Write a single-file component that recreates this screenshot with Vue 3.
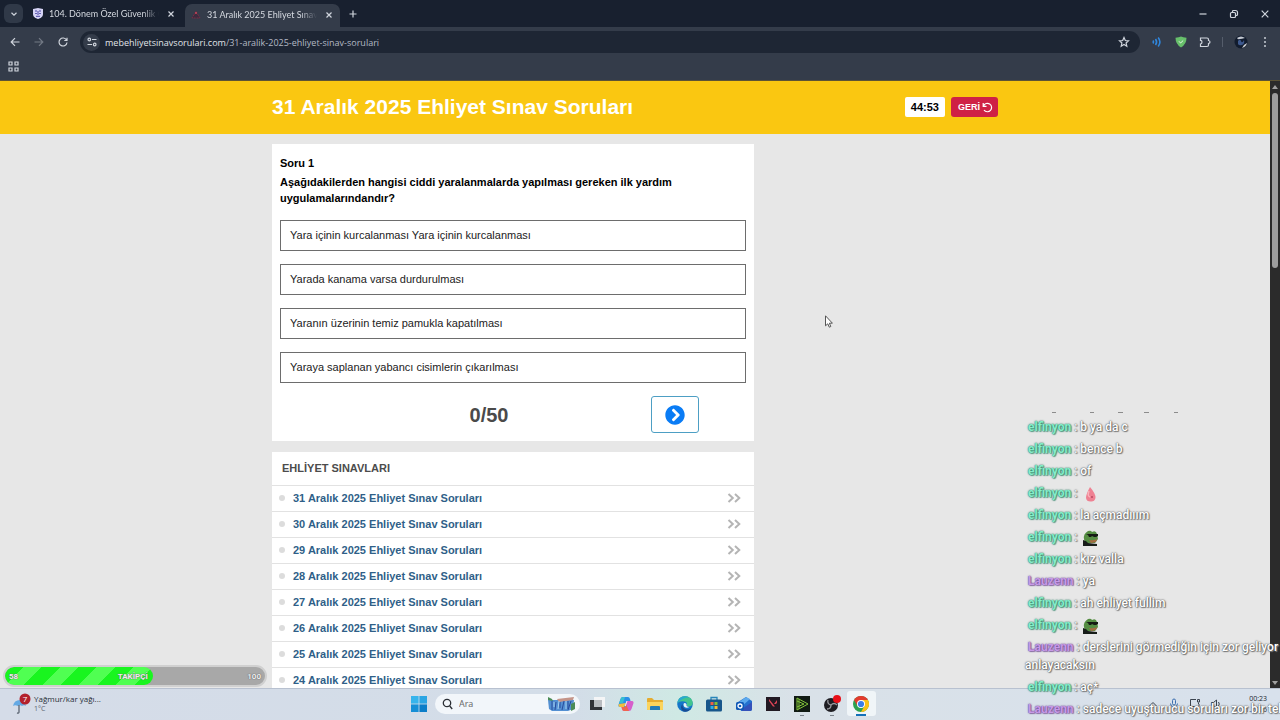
<script setup>
import { ref } from 'vue'

const url = 'mebehliyetsinavsorulari.com'
const path = '/31-aralik-2025-ehliyet-sinav-sorulari'
const search = ref('')

const options = [
  'Yara içinin kurcalanması Yara içinin kurcalanması',
  'Yarada kanama varsa durdurulması',
  'Yaranın üzerinin temiz pamukla kapatılması',
  'Yaraya saplanan yabancı cisimlerin çıkarılması',
]

const exams = [31, 30, 29, 28, 27, 26, 25, 24].map((day) => `${day} Aralık 2025 Ehliyet Sınav Soruları`)

const messages = [
  { user: 'elfinyon', text: 'b ya da c' },
  { user: 'elfinyon', text: 'bence b' },
  { user: 'elfinyon', text: 'of' },
  { user: 'elfinyon', emote: 'drop' },
  { user: 'elfinyon', text: 'la açmadııım' },
  { user: 'elfinyon', emote: 'frog' },
  { user: 'elfinyon', text: 'kız valla' },
  { user: 'Lauzenn', text: 'ya' },
  { user: 'elfinyon', text: 'ah ehliyet fullim' },
  { user: 'elfinyon', emote: 'frog' },
  { user: 'Lauzenn', text: 'derslerini görmediğin için zor geliyor\nanlayacaksın' },
  { user: 'elfinyon', text: 'aç*' },
  { user: 'Lauzenn', text: 'sadece uyuşturucu soruları zor bir tek' },
]

const followers = { current: 58, goal: 100, fill: 57 }
</script>

<template>
  <div class="desktop">
    <div class="browser">
      <div class="tabs">
        <button class="tab-search" aria-label="Sekme ara">
          <svg width="8" height="8" viewBox="0 0 8 8"><path d="M1.5 2.8 4 5.2l2.5-2.4" /></svg>
        </button>
        <div class="tab">
          <svg class="favicon" width="10" height="11" viewBox="0 0 10 11">
            <path d="M0 1 5 0l5 1v5c0 3-2.500 4.300-5 5C2.500 10.300 0 9 0 6z" fill="#d5d3f5" />
            <path d="M2 3h2M6 3h2M2.200 5.500h1.600M6.200 5.500h1.600M5 3v4M3 8.300h4" stroke="#4a45a5" />
          </svg>
          <span class="tab-title">104. Dönem Özel Güvenlik Çıkmış</span>
          <button class="icon-button" aria-label="Kapat">
            <svg width="8" height="8" viewBox="0 0 8 8"><path d="m1.500 1.500 5 5m0-5-5 5" /></svg>
          </button>
        </div>
        <div class="tab active">
          <svg class="favicon" width="10" height="10" viewBox="0 0 10 10">
            <path d="M5 1.500 9 8H1z" fill="#3b2c3f" stroke="#7b2b45" stroke-dasharray="2 1" />
            <circle cx="5" cy="3" r="1" fill="#c9485a" />
          </svg>
          <span class="tab-title">31 Aralık 2025 Ehliyet Sınav Soruları</span>
          <button class="icon-button" aria-label="Kapat">
            <svg width="8" height="8" viewBox="0 0 8 8"><path d="m1.500 1.500 5 5m0-5-5 5" /></svg>
          </button>
        </div>
        <button class="icon-button new-tab" aria-label="Yeni sekme">
          <svg width="10" height="10" viewBox="0 0 10 10"><path d="M5 1.500v7M1.500 5h7" /></svg>
        </button>
        <div class="window-buttons">
          <button class="icon-button" aria-label="Simge durumuna küçült">
            <svg width="10" height="10" viewBox="0 0 10 10"><path d="M1.500 5h7" /></svg>
          </button>
          <button class="icon-button" aria-label="Önceki boyut">
            <svg width="10" height="10" viewBox="0 0 10 10">
              <rect x="1.500" y="3.500" width="5" height="5" rx="1" />
              <path d="M3.500 3V2.500a1 1 0 0 1 1-1h2a2 2 0 0 1 2 2v2a1 1 0 0 1-1 1H7" />
            </svg>
          </button>
          <button class="icon-button" aria-label="Pencereyi kapat">
            <svg width="10" height="10" viewBox="0 0 10 10"><path d="m1.700 1.700 6.600 6.600m0-6.600L1.700 8.300" /></svg>
          </button>
        </div>
      </div>

      <div class="toolbar">
        <button class="icon-button nav" aria-label="Geri">
          <svg width="12" height="12" viewBox="0 0 12 12"><path d="M10.500 6h-8M6 2.200 2.200 6 6 9.800" /></svg>
        </button>
        <button class="icon-button nav faded" aria-label="İleri">
          <svg width="12" height="12" viewBox="0 0 12 12"><path d="M1.500 6h8M6 2.200 9.800 6 6 9.800" /></svg>
        </button>
        <button class="icon-button nav" aria-label="Yenile">
          <svg width="12" height="12" viewBox="0 0 12 12"><path d="M9.500 4A4 4 0 1 0 10 6.500M10 1.800v2.700H7.300" /></svg>
        </button>
        <div class="address">
          <button class="site-info" aria-label="Site bilgileri">
            <svg width="10" height="10" viewBox="0 0 10 10">
              <circle cx="2.300" cy="2.500" r="1.300" />
              <path d="M5 2.500h4.500M.5 7.500H5" />
              <circle cx="7.700" cy="7.500" r="1.300" />
            </svg>
          </button>
          <a class="url" href="#">{{ url }}<span>{{ path }}</span></a>
          <button class="icon-button" aria-label="Yer işareti ekle">
            <svg width="12" height="12" viewBox="0 0 12 12">
              <path d="m6 1.500 1.300 3 3.200.3L8.100 7l.7 3.200L6 8.500l-2.800 1.700.7-3.200L1.500 4.800l3.200-.3z" />
            </svg>
          </button>
        </div>
        <div class="extensions">
          <svg width="12" height="12" viewBox="0 0 12 12" fill="none" stroke="#2f86dd" stroke-width="1.600">
            <path d="M2 4.500q1 1.500 0 3M4.500 3q2.200 3 0 6M7.200 1.500q3.400 4.500 0 9" />
          </svg>
          <svg width="12" height="12" viewBox="0 0 12 12">
            <path d="M.5 1.800Q4 1.600 6 .6q2 1 5.500 1.200 0 6.500-5.500 9.700Q.5 8.300.5 1.800z" fill="#67bf6b" />
            <path d="m4 5.300 1.600 1.700L8.200 4.500" fill="none" stroke="#e7f7e7" />
          </svg>
          <svg class="outline" width="12" height="12" viewBox="0 0 12 12">
            <path d="M1.500 2H8q1.500 0 1.500 1.500v1q1.500.2 1.500 1.500T9.500 7.500V9q0 1.500-1.500 1.500H1.500V8q1.500-.3 1.500-2T1.500 4.300z" />
          </svg>
          <span class="divider"></span>
          <svg width="14" height="14" viewBox="0 0 14 14">
            <circle cx="7" cy="7" r="6.500" fill="#121c2e" />
            <path d="M3 3q4-3 8 0l-3 .7-4 .6z" fill="#c3c8d1" />
            <path d="M4 6q2-3 3 0t3-1q1 4-2 5T4 9z" fill="#3d588d" />
            <path d="M13 8q-1 4-5 5l2-3z" fill="#d5d7da" />
          </svg>
          <svg width="12" height="12" viewBox="0 0 12 12" fill="#c9ced6">
            <circle cx="6" cy="2" r="1" /><circle cx="6" cy="6" r="1" /><circle cx="6" cy="10" r="1" />
          </svg>
        </div>
      </div>

      <div class="bookmarks">
        <button class="icon-button" aria-label="Uygulamalar">
          <svg width="11" height="11" viewBox="0 0 11 11">
            <path d="M1 1h3v3H1zM7 1h3v3H7zM1 7h3v3H1zM7 7h3v3H7z" />
          </svg>
        </button>
      </div>

      <div class="viewport">
        <div class="site">
          <header class="site-header">
            <div class="container header-row">
              <h1>31 Aralık 2025 Ehliyet Sınav Soruları</h1>
              <span class="timer">44:53</span>
              <button class="back">
                GERİ
                <svg width="11" height="11" viewBox="0 0 11 11"><path d="M1.200 1v3.300h3.300M1.500 4A4.200 4.200 0 1 1 2 8" /></svg>
              </button>
            </div>
          </header>

          <main class="container">
            <section class="card question">
              <h2>Soru 1</h2>
              <p>Aşağıdakilerden hangisi ciddi yaralanmalarda yapılması gereken ilk yardım uygulamalarındandır?</p>
              <div class="options">
                <button v-for="option in options" :key="option" class="option">{{ option }}</button>
              </div>
              <div class="progress">
                <span class="count">0/50</span>
                <button class="next" aria-label="Sonraki soru">
                  <svg width="20" height="20" viewBox="0 0 512 512">
                    <path d="M256 8c137 0 248 111 248 248S393 504 256 504 8 393 8 256 119 8 256 8zm113.900 231L234.400 103.500c-9.400-9.400-24.600-9.400-33.900 0l-17 17c-9.400 9.400-9.400 24.600 0 33.900L285.100 256 183.500 357.600c-9.400 9.400-9.400 24.600 0 33.900l17 17c9.400 9.400 24.600 9.400 33.900 0L369.900 273c9.400-9.400 9.400-24.600 0-34z" />
                  </svg>
                </button>
              </div>
            </section>

            <section class="card">
              <h3>EHLİYET SINAVLARI</h3>
              <ul class="exams">
                <li v-for="exam in exams" :key="exam">
                  <a href="#">{{ exam }}</a>
                  <svg width="14" height="10" viewBox="0 0 14 10"><path d="m1.500 1 4.300 4-4.300 4M8 1l4.300 4L8 9" /></svg>
                </li>
              </ul>
            </section>
          </main>
        </div>

        <div class="scrollbar">
          <svg width="8" height="6" viewBox="0 0 8 6"><path d="M4 1 7 5H1z" /></svg>
          <div class="thumb"></div>
          <svg width="8" height="6" viewBox="0 0 8 6"><path d="M4 5 7 1H1z" /></svg>
        </div>
      </div>
    </div>

    <footer class="taskbar">
      <div class="weather">
        <svg width="20" height="22" viewBox="0 0 20 22">
          <path d="M2 13q1-6 7-6 5 1 6 6-2-1.500-4 0-2-1.500-4 0-3-1.500-5 0z" fill="#64a9e4" />
          <path d="M8 12v7q0 1.500-2 1" fill="none" stroke="#5c6572" stroke-width="1.300" />
          <circle cx="14" cy="6" r="5.500" fill="#b3202c" />
          <text x="14" y="9" text-anchor="middle">7</text>
        </svg>
        <div class="weather-text">
          <span>Yağmur/kar yağı...</span>
          <small>1°C</small>
        </div>
      </div>

      <div class="taskbar-center">
        <button class="app" aria-label="Başlat">
          <svg width="16" height="16" viewBox="0 0 16 16">
            <path d="M0 0h7.600v7.600H0z" fill="#37b4ec" /><path d="M8.400 0H16v7.600H8.400z" fill="#2ba5e3" />
            <path d="M0 8.400h7.600V16H0z" fill="#168fd6" /><path d="M8.400 8.400H16V16H8.400z" fill="#0b7dc8" />
          </svg>
        </button>
        <label class="search">
          <svg width="11" height="12" viewBox="0 0 11 12"><circle cx="5" cy="5" r="3.700" /><path d="m7.700 8 2.500 3" /></svg>
          <input v-model="search" type="text" placeholder="Ara" aria-label="Ara" />
          <svg class="doodle" width="29" height="16" viewBox="0 0 29 16">
            <path d="M1 4h26l-1 9-5 2H5l-3-2z" fill="#538fd2" />
            <path d="M1 1l4 2 1 2-5-1zM24 8l4-2v7l-4 2z" fill="#4a8b57" />
            <path d="m10 3 17-2-1 3-14 2z" fill="#c49489" />
            <path d="M5 5v9M9 6l-1 8M13 6v6M17 5l-2 9M21 5v8M24 5l-3 9" stroke="#284b9c" fill="none" />
            <path d="M7 6v5M12 5l-1 8M19 5v8" stroke="#a6d0f0" fill="none" />
          </svg>
        </label>
        <div class="apps">
          <button class="app" aria-label="Görev görünümü">
            <svg width="16" height="16" viewBox="0 0 16 16">
              <path d="M5 1h11v10H5z" fill="#f4f5f6" /><path d="M1 4h12v10H1z" fill="#303236" /><path d="M5 4h8v7H5z" fill="#b9bcc0" />
            </svg>
          </button>
          <button class="app" aria-label="Copilot">
            <svg width="16" height="16" viewBox="0 0 16 16">
              <path d="M5 1h5q1.500 0 2 2l.5 2H9L7 11H2Q0 11 .6 8.500L2.500 3Q3 1 5 1z" fill="#2a8fe8" />
              <path d="M2.500 3Q3 1 5 1h2L5 7 1 7.500z" fill="#38bfd0" />
              <path d="M.8 8Q0 11 2 11h4l2-4z" fill="#f2bd3e" />
              <path d="M9 5h5q2 0 1.400 2.500L13.500 13q-.5 2-2.500 2H6q-1.500 0-2-2l-.5-2H7z" fill="#d65fcb" />
              <path d="M3.500 11H7l1-3 3 7H6q-1.500 0-2-2z" fill="#f0654f" />
              <path d="m6.700 10 1.800-5h1l-1.800 5z" fill="#eef2f9" />
            </svg>
          </button>
          <button class="app" aria-label="Dosya Gezgini">
            <svg width="16" height="16" viewBox="0 0 16 16">
              <path d="M0 3q0-1 1-1h4l2 2h8q1 0 1 1v8q0 1-1 1H1q-1 0-1-1z" fill="#e5ac2f" />
              <path d="M0 6h16v7q0 1-1 1H1q-1 0-1-1z" fill="#fbd45c" /><path d="M4 10h8q1 0 1 1v3H3v-3q0-1 1-1z" fill="#247db7" />
            </svg>
          </button>
          <button class="app" aria-label="Edge">
            <svg width="16" height="16" viewBox="0 0 16 16">
              <circle cx="8" cy="8" r="7.800" fill="#1476c9" />
              <path d="M.3 7Q1.500.3 8 .2q7 .3 7.800 6.600-.2 3.800-4 3.800-2.500 0-2-1.600 1-3-2.500-3.500Q3 4.500.3 7z" fill="#42c48f" />
              <path d="M.3 7Q1.500.3 8 .2q2 0 4 1.200Q6 1 .3 7z" fill="#29a9d0" />
              <path d="M5.500 8q-.5 5 5 5.500 2 0 4-1.500-3 4.500-8 3.600Q2 12 5.500 8z" fill="#164c94" />
              <path d="M6.500 8q1-2 3 0-.7 3 3 3-3 1.500-5 0-1.200-1.200-1-3z" fill="#e7f3f7" />
            </svg>
          </button>
          <button class="app" aria-label="Microsoft Store">
            <svg width="16" height="16" viewBox="0 0 16 16">
              <path d="M5 4V1.500h6V4" fill="none" stroke="#2785ba" stroke-width="1.300" />
              <rect y="3.500" width="16" height="12" rx="1.500" fill="#17568b" />
              <path d="M4.500 6h3v3h-3z" fill="#ed6046" /><path d="M8.500 6h3v3h-3z" fill="#83bd37" />
              <path d="M4.500 10h3v3h-3z" fill="#2eafe3" /><path d="M8.500 10h3v3h-3z" fill="#f4bd36" />
            </svg>
          </button>
          <button class="app" aria-label="Outlook">
            <svg width="16" height="16" viewBox="0 0 16 16">
              <path d="M2 6 10 1l6 4v8q0 2-2 2H5z" fill="#2470cf" /><path d="m2 7 8-6 4 2-9 8z" fill="#5ca9ed" />
              <path d="m16 6-10 7v2h8q2 0 2-2z" fill="#3451ba" />
              <rect y="6" width="8" height="8" rx="1.500" fill="#1159b7" /><circle cx="4" cy="10" r="2" fill="none" stroke="#fff" stroke-width="1.300" />
            </svg>
          </button>
          <button class="app" aria-label="Valorant">
            <svg width="16" height="16" viewBox="0 0 16 16">
              <path d="M1 1h14v14H1z" fill="#211922" /><path d="m4 5 4 5.500h2L4 3zM12 4 9 8h2l1-1.300z" fill="#de4457" />
            </svg>
          </button>
          <button class="app running" aria-label="Oynatıcı">
            <svg width="16" height="16" viewBox="0 0 16 16">
              <path d="M0 0h16v16H0z" fill="#111a13" />
              <path d="m3 2 11 6-11 6zM3 5l7 3-7 3M5 3v10" fill="none" stroke="#83c63a" />
            </svg>
          </button>
          <button class="app running" aria-label="OBS Studio">
            <svg width="18" height="18" viewBox="0 0 18 18">
              <circle cx="8" cy="10" r="7" fill="#1e1d22" />
              <path d="M8 10Q4 9 5 5M8 10q3-3 6 0M8 10q0 4-4 4" fill="none" stroke="#98989d" stroke-width="1.300" />
              <circle cx="14" cy="4" r="4" fill="#e80f18" />
            </svg>
          </button>
          <button class="app current" aria-label="Chrome">
            <svg width="16" height="16" viewBox="0 0 16 16">
              <circle cx="8" cy="8" r="8" fill="#2ca150" />
              <path d="M8 8 1.070 4A8 8 0 0 1 14.930 4z" fill="#e33b2e" />
              <path d="M8 4h6.930A8 8 0 0 1 8 16l3.460-6z" fill="#fbc116" />
              <path d="M1.070 4 4.540 10 8 4z" fill="#e33b2e" />
              <circle cx="8" cy="8" r="4" fill="#fff" /><circle cx="8" cy="8" r="3.100" fill="#3b7ee8" />
            </svg>
          </button>
        </div>
      </div>

      <div class="tray">
        <svg width="12" height="12" viewBox="0 0 12 12"><path d="m2.500 8 3.500-3.500L9.500 8" /></svg>
        <svg class="mic" width="12" height="12" viewBox="0 0 12 12"><rect x="4.500" y="1" width="3" height="6" rx="1.500" /><path d="M2.500 5.500q0 3.500 3.500 3.500t3.500-3.500M6 9v2.500" /></svg>
        <svg width="12" height="12" viewBox="0 0 12 12"><path d="M7 1.500H1.500v7H10V6M4 11h4M9.500 4.500V6M8.500 1.500h2v2.500h-2z" /></svg>
        <svg width="12" height="12" viewBox="0 0 12 12"><path d="M1.500 4.500h2L6.500 2v8l-3-2.500h-2zM8.500 4q1.500 2 0 4" /></svg>
        <div class="clock">
          <span>00:23</span>
          <span>14.01.2026</span>
        </div>
      </div>
    </footer>

    <!-- stream overlays -->
    <div class="goal">
      <div class="goal-fill" :style="{ width: followers.fill + '%' }"></div>
      <div class="goal-labels">
        <span>{{ followers.current }}</span>
        <span>TAKİPÇİ</span>
        <span>{{ followers.goal }}</span>
      </div>
    </div>

    <div class="chat">
      <svg width="180" height="2" viewBox="0 0 180 2">
        <path d="M27 .5h4M65 .5h4M93 .5h5M119 .5h5M149 .5h4" stroke="#8c8c8c" />
      </svg>
      <div v-for="(message, i) in messages" :key="i" class="message">
        <b :class="message.user === 'Lauzenn' ? 'purple' : 'green'">{{ message.user }}</b> : <span v-if="message.text">{{ message.text }}</span>
        <svg v-else-if="message.emote === 'drop'" class="emote" width="18" height="16" viewBox="0 0 18 16">
          <path d="M8 1q6 7 5.500 11-1 4-5 3.500-4 0-4.500-3.500Q4 8 8 1z" fill="#ef8192" />
          <path d="M7 5q-2 5 1 6" fill="none" stroke="#f9b3bb" stroke-width="1.500" /><circle cx="10" cy="11" r="1" fill="#b84960" />
        </svg>
        <svg v-else class="emote" width="18" height="16" viewBox="0 0 18 16">
          <path d="M2 9q-1-5 4-8 3-1 4 1 4-2 5 2l1 5-3 4H3z" fill="#558d42" />
          <path d="M4 4h12v2l-2 1h-2l-2-1-1 1H7L6 5z" fill="#151a14" />
          <path d="M7 10q4 1 8-1l-1 3-5 1z" fill="#a56c43" />
          <path d="M1 10q4 1 5 3l9 1v2H1z" fill="#171c19" />
        </svg>
      </div>
    </div>

    <svg class="cursor" width="8" height="13" viewBox="0 0 8 13"><path d="M.5.800v10l2.300-2 1.500 3.400 1.500-.7L4.400 8.200h3z" /></svg>
  </div>
</template>

<style>
body {
  margin: 0;
}
</style>

<style scoped>
.desktop {
  position: relative;
  display: flex;
  flex-direction: column;
  height: 100vh;
  overflow: hidden;
  font-family: "Liberation Sans", Arial, sans-serif;
  background: #e7e7e7;
}

button {
  margin: 0;
  padding: 0;
  border: 0;
  background: none;
  font-family: inherit;
  color: inherit;
}

svg {
  display: block;
  flex-shrink: 0;
}

a {
  text-decoration: none;
}

/* Browser */
.browser {
  flex: 1;
  min-height: 0;
  display: flex;
  flex-direction: column;
  font-family: "Open Sans", "Noto Sans", sans-serif;
}

.tabs {
  display: flex;
  align-items: center;
  box-sizing: border-box;
  height: 27px;
  padding-left: 4px;
  background: #18202f;
  color: #d5d9e0;
  font-family: Lato, "Open Sans", sans-serif;
  font-size: 9px;
}

.tab-search,
.icon-button,
.site-info {
  display: flex;
  align-items: center;
  justify-content: center;
}

.tab-search svg,
.icon-button svg,
.site-info svg,
.outline {
  fill: none;
  stroke: #d0d5dd;
  stroke-width: 1.2;
}

.tab-search {
  width: 19px;
  height: 19px;
  border-radius: 6px;
  background: #303948;
}

.tab {
  display: flex;
  align-items: center;
  gap: 6px;
  box-sizing: border-box;
  width: 155px;
  height: 23px;
  margin-left: 7px;
  padding: 0 8px 0 3px;
}

.tab.active {
  align-self: flex-end;
  margin-left: 0;
  padding: 0 5px 2px 6px;
  border-radius: 7px 7px 0 0;
  background: #343c4a;
}

.tab-title {
  flex: 1;
  overflow: hidden;
  white-space: nowrap;
  mask-image: linear-gradient(to right, #000 85%, transparent);
}

.tab .icon-button {
  width: 12px;
}

.new-tab {
  width: 26px;
}

.window-buttons {
  display: flex;
  margin-left: auto;
}

.window-buttons .icon-button {
  width: 31px;
  height: 27px;
}

.toolbar {
  display: flex;
  align-items: center;
  height: 30px;
  padding-left: 3px;
  background: #343c4a;
}

.nav {
  width: 24px;
  height: 22px;
}

.faded {
  opacity: 0.4;
}

.address {
  flex: 1;
  display: flex;
  align-items: center;
  height: 22px;
  margin-left: 5px;
  padding: 0 10px 0 3px;
  border-radius: 11px;
  background: #1e2634;
}

.site-info {
  width: 17px;
  height: 17px;
  margin-right: 5px;
  border-radius: 50%;
  background: #343c4a;
}

.url {
  flex: 1;
  font-size: 9px;
  color: #e1e4e9;
}

.url span {
  color: #b3b9c4;
}

.extensions {
  display: flex;
  align-items: center;
  gap: 12px;
  padding: 0 9px 0 11px;
}

.divider {
  width: 1px;
  height: 10px;
  margin: 0 -1px;
  background: #555d6b;
}

.divider + svg {
  margin-right: -1px;
}

.bookmarks {
  display: flex;
  align-items: center;
  box-sizing: border-box;
  height: 24px;
  padding: 0 8px 4px;
  border-bottom: 1px solid #5c5335;
  background: #343c4a;
}

.viewport {
  flex: 1;
  min-height: 0;
  display: flex;
}

.scrollbar {
  display: flex;
  flex-direction: column;
  align-items: center;
  box-sizing: border-box;
  width: 10px;
  padding: 3px 1px 2px;
  background: #2b2b2b;
  fill: #a0a0a0;
}

.thumb {
  width: 6px;
  height: 175px;
  margin: 3px 0 auto;
  border-radius: 3px;
  background: #9e9e9e;
}

/* Site */
.site {
  flex: 1;
  overflow: hidden;
  background: #e7e7e7;
  color: #000;
  font-family: "Liberation Sans", Arial, sans-serif;
}

.container {
  max-width: 726px;
  margin: 0 auto;
}

.site-header {
  background: #fac711;
}

.header-row {
  display: flex;
  align-items: center;
  box-sizing: border-box;
  height: 53px;
  padding-bottom: 1px;
}

h1 {
  flex: 1;
  margin: 0;
  font-size: 21px;
  line-height: 26px;
  color: #fff;
}

.timer {
  padding: 0 6px;
  border-radius: 2px;
  background: #fff;
  font-size: 11px;
  font-weight: bold;
  line-height: 20px;
}

.back {
  display: flex;
  align-items: center;
  gap: 2px;
  height: 20px;
  margin-left: 6px;
  padding: 0 5px 0 7px;
  border-radius: 3px;
  background: #cf2145;
  font-size: 9px;
  font-weight: bold;
  color: #fff;
}

.back svg {
  fill: none;
  stroke: #fff;
  stroke-width: 1.2;
}

.card {
  max-width: 482px;
  margin-top: 11px;
  background: #fff;
}

.question {
  box-sizing: border-box;
  margin-top: 10px;
  padding: 11px 8px 8px;
}

.question h2 {
  margin: 0 0 3px;
  font-size: 11px;
  line-height: 16px;
}

.question p {
  margin: 0 0 14px;
  font-size: 11px;
  font-weight: bold;
  line-height: 16px;
}

.options {
  display: flex;
  flex-direction: column;
  gap: 13px;
}

.option {
  height: 31px;
  padding: 0 9px 2px;
  border: 1px solid #6d6d6d;
  font-size: 11px;
  text-align: left;
  color: #222;
}

.progress {
  display: grid;
  grid-template-columns: 1fr 95px;
  align-items: center;
  margin-top: 13px;
}

.count {
  padding-right: 46px;
  margin-left: 93px;
  font-size: 20px;
  font-weight: bold;
  line-height: 36px;
  text-align: center;
  color: #4a4a4a;
}

.next {
  display: flex;
  align-items: center;
  justify-content: center;
  box-sizing: border-box;
  width: 48px;
  height: 37px;
  border: 1px solid #4d9fc4;
  border-radius: 3px;
  fill: #0a7cf5;
}

h3 {
  margin: 0;
  padding: 0 10px;
  font-size: 11px;
  line-height: 33px;
  color: #4c4c4c;
}

.exams {
  margin: 0;
  padding: 0;
  list-style: none;
}

.exams li {
  display: flex;
  align-items: center;
  box-sizing: border-box;
  height: 26px;
  padding: 0 13px 2px 7px;
  border-top: 1px solid #e2e2e2;
  font-size: 11px;
  font-weight: bold;
}

.exams li::before {
  content: "";
  width: 6px;
  height: 6px;
  margin-right: 8px;
  border-radius: 50%;
  background: #dcdcdc;
}

.exams a {
  flex: 1;
  color: #2f5f88;
}

.exams svg {
  fill: none;
  stroke: #b4b4b4;
  stroke-width: 2;
}

/* Taskbar */
.taskbar {
  display: grid;
  grid-template-columns: 1fr auto 1fr;
  align-items: center;
  box-sizing: border-box;
  height: 32px;
  padding-bottom: 2px;
  border-top: 1px solid #b8c1d0;
  background: linear-gradient(to right, #d5dce8, #d3dde8 45%, #cfe9e4 53%, #d9e1e8 62%, #d8e1ec);
  font-family: "Open Sans", "Noto Sans", sans-serif;
}

.weather {
  display: flex;
  gap: 3px;
  padding-left: 11px;
}

.weather text {
  font-size: 8px;
  fill: #fff;
}

.weather-text {
  display: flex;
  flex-direction: column;
  font-size: 8px;
  line-height: 11px;
  color: #2a3038;
}

.weather-text small {
  font-size: 7px;
  line-height: 10px;
  color: #5b6470;
}

.taskbar-center {
  display: flex;
  align-items: center;
  gap: 2px;
}

.app {
  position: relative;
  display: flex;
  align-items: center;
  justify-content: center;
  min-width: 29px;
  height: 25px;
}

.apps {
  display: grid;
  grid-template-columns: repeat(10, 1fr);
  width: 294px;
}

.running::after,
.current::after {
  content: "";
  position: absolute;
  bottom: 0;
  width: 4px;
  height: 1px;
  background: #7c848c;
}

.current {
  border-radius: 3px;
  background: #f0f5f8;
}

.current::after {
  width: 10px;
  height: 2px;
  background: #1471b8;
}

.search {
  display: flex;
  align-items: center;
  box-sizing: border-box;
  width: 145px;
  height: 20px;
  padding: 0 4px 0 7px;
  border-radius: 10px;
  background: #f2f6fa;
}

.search svg:not(.doodle) {
  fill: none;
  stroke: #2b2f35;
  stroke-width: 1.3;
}

.search input {
  flex: 1;
  min-width: 0;
  padding: 0 0 0 6px;
  border: 0;
  outline: 0;
  background: none;
  font-family: inherit;
  font-size: 9px;
}

.search input::placeholder {
  color: #666;
}

.tray {
  display: flex;
  align-items: center;
  justify-content: flex-end;
  gap: 9px;
  padding-right: 13px;
  fill: none;
  stroke: #3b434e;
}

.mic {
  stroke: #3c6faf;
}

.clock {
  display: flex;
  flex-direction: column;
  align-items: flex-end;
  font-size: 7px;
  line-height: 11px;
  color: #20262d;
  stroke: none;
}

/* Overlays */
.goal {
  position: absolute;
  left: 3px;
  bottom: 33px;
  box-sizing: border-box;
  width: 264px;
  height: 22px;
  overflow: hidden;
  border: 2px solid #d0d0d0;
  border-radius: 11px;
  background: #a8a8a8;
}

.goal-fill {
  height: 100%;
  border-radius: 9px;
  background: repeating-linear-gradient(135deg, #19f51f 0 13px, #50ff52 13px 26px);
}

.goal-labels {
  position: absolute;
  inset: 0;
  display: flex;
  align-items: center;
  justify-content: space-between;
  padding: 0 4px;
  font-family: Roboto, sans-serif;
  font-size: 8px;
  font-weight: bold;
  color: #eee;
  text-shadow: 0 0 1px #666, 0 0 1px #666;
}

.chat {
  position: absolute;
  right: 0;
  bottom: 2px;
  display: flex;
  flex-direction: column;
  gap: 4px;
  width: 255px;
  font-family: Roboto, sans-serif;
  font-size: 12px;
  font-weight: 500;
  line-height: 18px;
  white-space: pre;
  color: #fff;
  text-shadow: 0 0 1px #555, 0 0 2px #555, 1px 1px 1px #888;
}

.message {
  min-height: 18px;
}

.message b {
  margin-left: 3px;
  font-weight: 700;
}

.green {
  color: #86ecc9;
  text-shadow: 0 0 1px #2c7f66, 0 0 2px #2c7f66, 1px 1px 1px #6aa593;
}

.purple {
  color: #c79ae6;
  text-shadow: 0 0 1px #6a4590, 0 0 2px #6a4590, 1px 1px 1px #9c86b0;
}

.emote {
  display: inline-block;
  margin-left: 2px;
  vertical-align: -5px;
}

.cursor {
  position: absolute;
  left: 825px;
  top: 315px;
  fill: #fff;
  stroke: #555;
}
</style>
